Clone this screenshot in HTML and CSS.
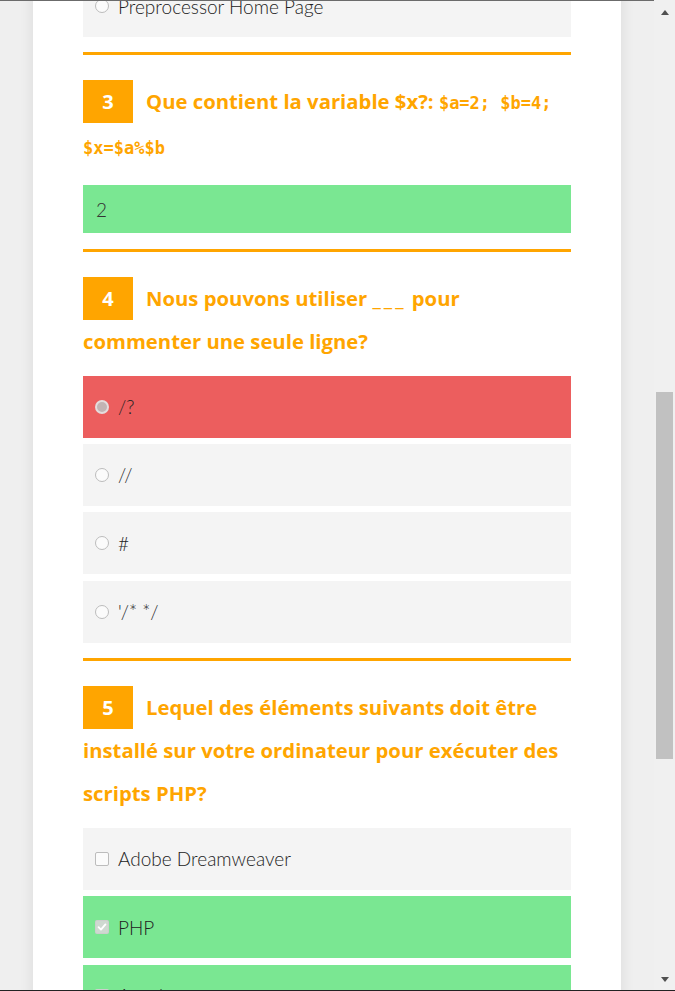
FILE: index.html
```html
<!DOCTYPE html>
<html lang="fr">
<head>
<meta charset="utf-8">
<title>Quiz PHP</title>
<link rel="stylesheet" href="styles.css">
</head>
<body>
<div class="frame">
  <div class="viewport">
    <main class="sheet">
      <ul class="options">
        <li class="option"><span class="radio"></span>Preprocessor Home Page</li>
      </ul>
      <hr class="divider">

      <section class="question">
        <h3 class="q-title q-title--code"><span class="q-num">3</span>Que contient la variable $x?: <code class="q-code">$a=2; $b=4; $x=$a%$b</code></h3>
        <div class="answer answer--correct">2</div>
      </section>
      <hr class="divider">

      <section class="question">
        <h3 class="q-title"><span class="q-num">4</span>Nous pouvons utiliser <span class="blank">___</span> pour commenter une seule ligne?</h3>
        <ul class="options">
          <li class="option option--wrong"><span class="radio radio--checked"></span>/?</li>
          <li class="option"><span class="radio"></span><span class="spaced">//</span></li>
          <li class="option"><span class="radio"></span>#</li>
          <li class="option"><span class="radio"></span>'/* */</li>
        </ul>
      </section>
      <hr class="divider">

      <section class="question">
        <h3 class="q-title"><span class="q-num">5</span>Lequel des éléments suivants doit être installé sur votre ordinateur pour exécuter des scripts PHP?</h3>
        <ul class="options">
          <li class="option"><span class="check"></span>Adobe Dreamweaver</li>
          <li class="option option--right"><span class="check check--checked"><svg viewBox="0 0 14 14" width="12" height="12"><path d="M3 7.2 L5.8 10 L11 4" fill="none" stroke="#fff" stroke-width="2.2" stroke-linecap="round" stroke-linejoin="round"/></svg></span>PHP</li>
          <li class="option option--right"><span class="check check--checked"><svg viewBox="0 0 14 14" width="12" height="12"><path d="M3 7.2 L5.8 10 L11 4" fill="none" stroke="#fff" stroke-width="2.2" stroke-linecap="round" stroke-linejoin="round"/></svg></span>Apache</li>
          <li class="option"><span class="check"></span>IIS</li>
        </ul>
      </section>
    </main>
  </div>
  <div class="scrollbar">
    <div class="sb-btn sb-btn--up"><span class="tri-up"></span></div>
    <div class="sb-thumb"></div>
    <div class="sb-btn sb-btn--down"><span class="tri-down"></span></div>
  </div>
</div>
<div class="bottom-edge"></div>
</body>
</html>
```

FILE: styles.css
```css
html, body {
  margin: 0;
  padding: 0;
}

body {
  height: 991px;
  display: flex;
  flex-direction: column;
  overflow: hidden;
  background: #efefef;
  font-family: Lato, "Open Sans", sans-serif;
}

.frame {
  flex: 1;
  min-height: 0;
  display: flex;
}

.bottom-edge {
  height: 1px;
  background: #222;
}

.viewport {
  flex: 1;
  min-width: 0;
  overflow: hidden;
  border-top: 1px solid #6b6b6b;
  display: flex;
  justify-content: center;
  align-items: flex-start;
}

.sheet {
  width: 588px;
  box-sizing: border-box;
  padding: 0 50px 40px;
  margin-top: -26px;
  background: #fff;
  box-shadow: 0 0 14px rgba(0, 0, 0, 0.09);
  min-height: 1100px;
}

.options {
  list-style: none;
  margin: 0;
  padding: 0;
}

.option {
  display: flex;
  align-items: center;
  gap: 9px;
  height: 62px;
  padding: 0 12px;
  margin-bottom: 6.33px;
  background: #f4f4f4;
  font-weight: 300;
  font-size: 19px;
  color: #222;
}

.option--wrong {
  background: #ec5e5e;
}

.option--right {
  background: #7ae792;
}

.spaced {
  letter-spacing: 2px;
}

.divider {
  height: 3px;
  border: 0;
  margin: 15.33px 0 25px;
  background: #ffa500;
}

.q-title {
  margin: 0 0 13px;
  font-family: "Open Sans", Lato, sans-serif;
  font-weight: 700;
  font-size: 20.3px;
  line-height: 43px;
  color: #ffa500;
}

.q-title--code {
  margin-bottom: 15px;
}

.blank {
  letter-spacing: 3px;
}

.q-num {
  float: left;
  width: 50px;
  height: 43px;
  margin-right: 13px;
  background: #ffa500;
  color: #fff;
  text-align: center;
  font-size: 20px;
  line-height: 43px;
}

.q-code {
  font-family: "DejaVu Sans Mono", monospace;
  font-weight: 700;
  font-size: 17px;
}

.answer {
  display: flex;
  align-items: center;
  height: 48px;
  padding-left: 13px;
  margin: 0 0 6.33px;
  font-weight: 300;
  font-size: 19px;
  color: #333;
}

.answer--correct {
  background: #7ae792;
}

.radio {
  flex: none;
  width: 14px;
  height: 14px;
  box-sizing: border-box;
  border-radius: 50%;
  border: 1px solid #bcbcbc;
  background: #fbfbfb;
}

.radio--checked {
  border: 2px solid rgba(255, 255, 255, 0.55);
  background: rgba(190, 190, 190, 0.9);
}

.check {
  flex: none;
  width: 14px;
  height: 14px;
  box-sizing: border-box;
  border-radius: 2px;
  border: 1px solid #bcbcbc;
  background: #fbfbfb;
  display: flex;
  align-items: center;
  justify-content: center;
}

.check--checked {
  border-color: rgba(205, 205, 205, 0.9);
  background: rgba(215, 215, 215, 0.9);
}

.scrollbar {
  flex: none;
  width: 21px;
  display: flex;
  flex-direction: column;
  align-items: center;
  background: #f0f0f0;
}

.sb-btn {
  flex: none;
  width: 100%;
  display: flex;
  align-items: center;
  justify-content: center;
}

.sb-btn--up {
  height: 25px;
}

.sb-btn--down {
  height: 21px;
  margin-top: auto;
}

.tri-up {
  width: 0;
  height: 0;
  border-left: 4.5px solid transparent;
  border-right: 4.5px solid transparent;
  border-bottom: 5px solid #505050;
}

.tri-down {
  width: 0;
  height: 0;
  border-left: 4.5px solid transparent;
  border-right: 4.5px solid transparent;
  border-top: 5px solid #505050;
}

.sb-thumb {
  width: 17px;
  height: 367px;
  margin-top: 367px;
  background: #c1c1c1;
}
```
